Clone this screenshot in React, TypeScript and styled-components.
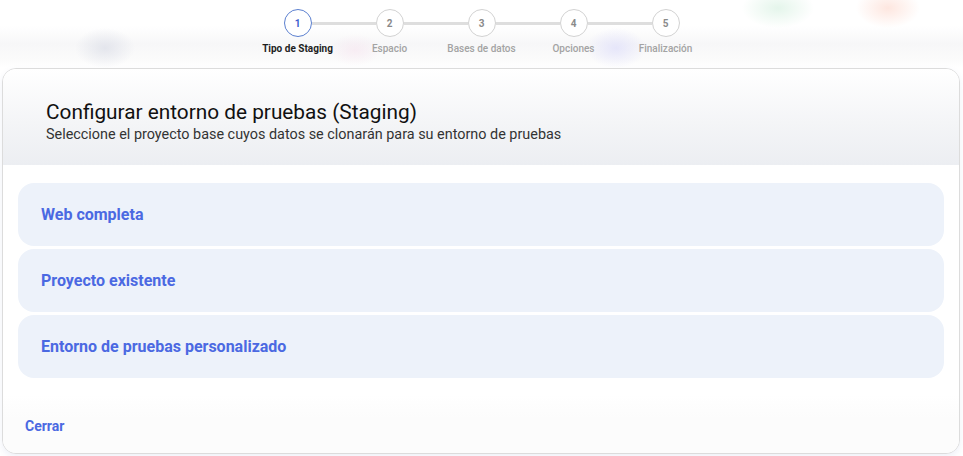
import React from 'react';
import styled, {createGlobalStyle} from 'styled-components';

const GlobalStyle = createGlobalStyle`
  html, body {
    margin: 0;
    padding: 0;
    background: #fff;
    font-family: Roboto, "Liberation Sans", Arial, sans-serif;
  }
`;

// faint blurred colour spots behind the stepper
const Page = styled.div`
  width: 963px;
  height: 456px;
  overflow: hidden;
  display: flex;
  flex-direction: column;
  background:
    radial-gradient(30px 20px at 105px 48px, rgba(214, 217, 228, 0.6), transparent),
    radial-gradient(26px 16px at 355px 50px, rgba(246, 222, 236, 0.45), transparent),
    radial-gradient(30px 20px at 616px 48px, rgba(222, 222, 250, 0.7), transparent),
    radial-gradient(36px 20px at 778px 8px, rgba(214, 240, 224, 0.65), transparent),
    radial-gradient(32px 20px at 888px 8px, rgba(253, 220, 210, 0.7), transparent),
    linear-gradient(180deg, #fff 0px, #fff 26px, #f7f7f8 44px, #fbfbfb 60px, #fff 68px);
`;

const Stepper = styled.div`
  display: flex;
  align-items: flex-start;
  justify-content: center;
  padding-top: 9px;
  height: 68px;
  flex-shrink: 0;
  box-sizing: border-box;
`;

const Step = styled.div`
  width: 28px;
  display: flex;
  flex-direction: column;
  align-items: center;
  gap: 6px;
`;

const Circle = styled.div<{ $active?: boolean }>`
  width: 28px;
  height: 28px;
  box-sizing: border-box;
  border-radius: 50%;
  border: 1.5px solid ${p => (p.$active ? '#5b7fcf' : '#d2d2d2')};
  background: #fff;
  display: flex;
  align-items: center;
  justify-content: center;
  font-size: 10px;
  font-weight: 700;
  color: ${p => (p.$active ? '#3f5fcf' : '#8a8a8a')};
`;

const StepLabel = styled.div<{ $active?: boolean }>`
  white-space: nowrap;
  font-size: 10px;
  font-weight: ${p => (p.$active ? 700 : 500)};
  color: ${p => (p.$active ? '#1e1e1e' : '#a3a3a3')};
`;

const Connector = styled.div`
  width: 64px;
  height: 3px;
  margin-top: 12.5px;
  background: #dedede;
`;

const Card = styled.div`
  margin: 0 3px 0 2px;
  border: 1px solid #dcdcdc;
  border-radius: 14px;
  background: #fff;
  overflow: hidden;
  box-shadow: 0 3px 6px rgba(120, 140, 200, 0.12);
`;

const Header = styled.div`
  padding: 31px 43px 22px;
  background: linear-gradient(180deg, #ffffff 0%, #f4f5f7 55%, #eceef2 100%);
`;

const Title = styled.h2`
  margin: 0;
  font-size: 20.8px;
  line-height: 24px;
  font-weight: 400;
  color: #111;
`;

const Subtitle = styled.p`
  margin: 2px 0 0;
  font-size: 14.4px;
  line-height: 17px;
  color: #333;
`;

const Body = styled.div`
  display: flex;
  flex-direction: column;
  gap: 3px;
  padding: 18px 15px 17px;
`;

const Option = styled.button`
  height: 63px;
  border: none;
  border-radius: 16px;
  background: #edf2fa;
  padding: 0 23px;
  text-align: left;
  font-family: inherit;
  font-size: 16px;
  font-weight: 700;
  color: #4b69e2;
  cursor: pointer;
`;

const Footer = styled.div`
  padding: 21px 22px 18px;
  background: linear-gradient(180deg, #ffffff 0%, #fcfcfc 40%, #fcfcfc 100%);
`;

const CloseButton = styled.button`
  border: none;
  background: none;
  padding: 0;
  font-family: inherit;
  font-size: 14px;
  line-height: 16px;
  font-weight: 700;
  color: #4b69e2;
  cursor: pointer;
`;

const steps = ['Tipo de Staging', 'Espacio', 'Bases de datos', 'Opciones', 'Finalización'];
const options = ['Web completa', 'Proyecto existente', 'Entorno de pruebas personalizado'];

export default function App() {
    return (
        <Page>
            <GlobalStyle/>
            <Stepper>
                {steps.map((s, i) => (
                    <React.Fragment key={s}>
                        {i > 0 && <Connector/>}
                        <Step>
                            <Circle $active={i === 0}>{i + 1}</Circle>
                            <StepLabel $active={i === 0}>{s}</StepLabel>
                        </Step>
                    </React.Fragment>
                ))}
            </Stepper>
            <Card>
                <Header>
                    <Title>Configurar entorno de pruebas (Staging)</Title>
                    <Subtitle>Seleccione el proyecto base cuyos datos se clonarán para su entorno de pruebas</Subtitle>
                </Header>
                <Body>
                    {options.map(o => (
                        <Option key={o}>{o}</Option>
                    ))}
                </Body>
                <Footer>
                    <CloseButton>Cerrar</CloseButton>
                </Footer>
            </Card>
        </Page>
    );
}
